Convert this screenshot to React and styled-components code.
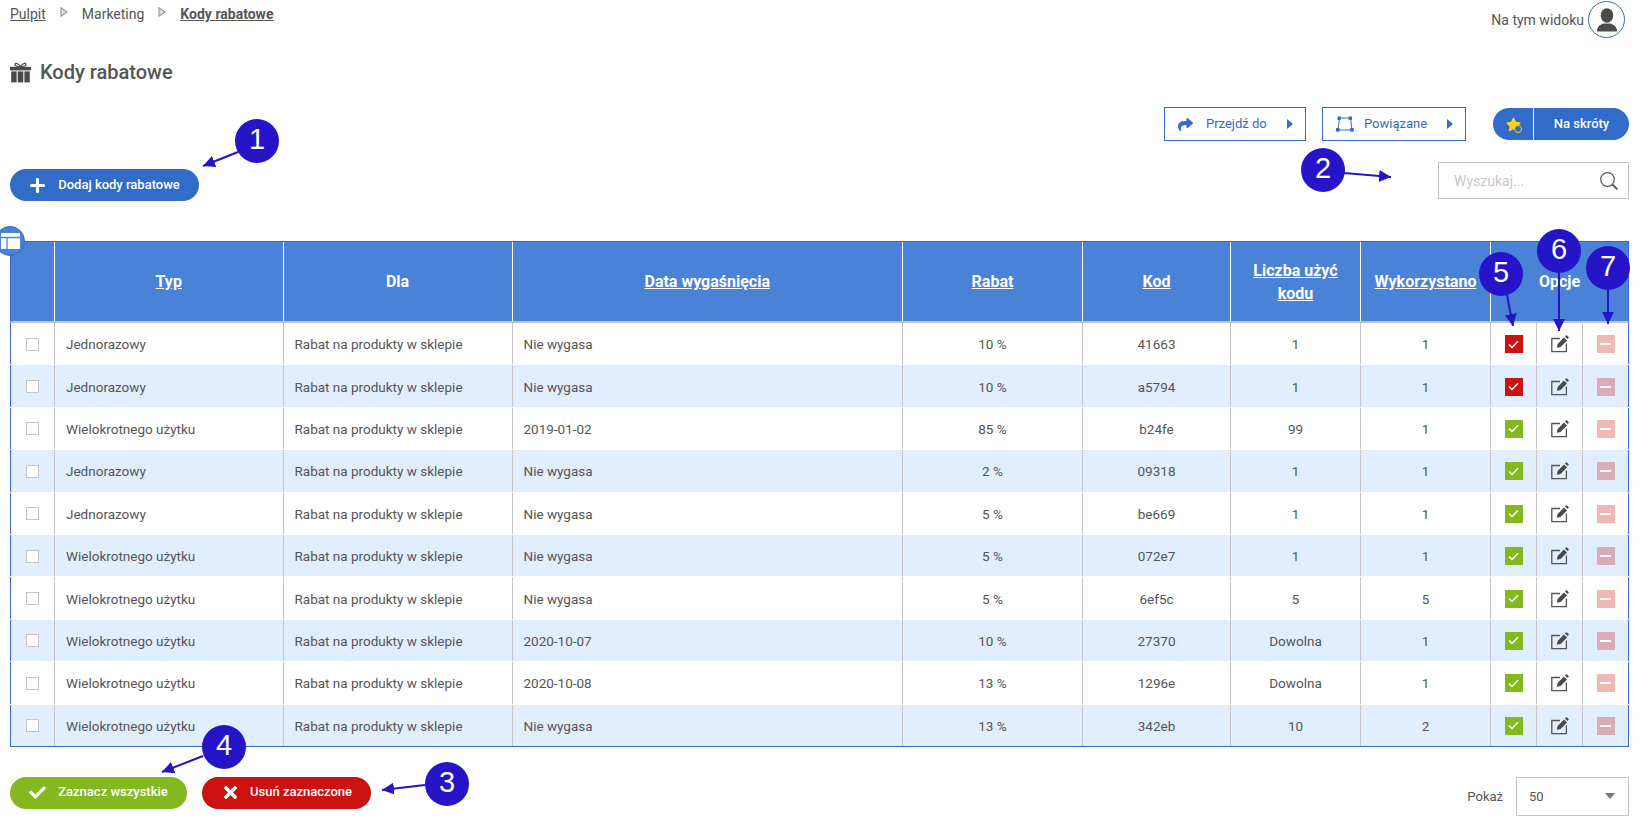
import React from "react";
import styled, { createGlobalStyle, css } from "styled-components";
import { FaPlus, FaCheck, FaTimes, FaShare, FaStar } from "react-icons/fa";

const Global = createGlobalStyle`
  html, body { margin: 0; padding: 0; background: #fff; overflow: hidden; }
  body { font-family: Roboto, "Liberation Sans", sans-serif; color: #555; font-size: 14px; }
  * { box-sizing: border-box; }
`;

const Page = styled.div`
  position: relative;
  width: 1640px;
  height: 830px;
  padding: 0 11px 0 10px;
  overflow: hidden;
`;

const TopBar = styled.div`
  display: flex;
  justify-content: space-between;
  align-items: flex-start;
  height: 62px;
  padding-right: 4px;
`;
const Crumbs = styled.nav`
  display: flex;
  align-items: center;
  height: 28px;
  font-size: 14px;
`;
const Crumb = styled.span`
  color: #555;
  text-decoration: ${(p) => (p.$link ? "underline" : "none")};
  font-weight: ${(p) => (p.$active ? 700 : 400)};
`;
const CrumbSep = styled.svg`
  width: 8px;
  height: 10px;
  margin: -5px 14px 0 14px;
`;
const UserBox = styled.div`
  display: flex;
  align-items: center;
  gap: 4px;
  padding-top: 1px;
  font-size: 14px;
  color: #555;
`;
const Avatar = styled.div`
  width: 37px;
  height: 37px;
  border-radius: 50%;
  border: 1px solid #306cc8;
  display: flex;
  align-items: center;
  justify-content: center;
`;

const Title = styled.h1`
  display: flex;
  align-items: center;
  gap: 9px;
  margin: 0;
  height: 20px;
  font-size: 20px;
  font-weight: 500;
  color: #555;
`;

const Actions = styled.div`
  display: flex;
  justify-content: flex-end;
  align-items: center;
  height: 34px;
  margin-top: 25px;
`;
const OutlineButton = styled.button`
  display: flex;
  align-items: center;
  width: ${(p) => p.$w}px;
  height: 34px;
  margin-right: ${(p) => p.$mr}px;
  padding: 0 12px 0 13px;
  background: #fff;
  border: 1px solid #306cc8;
  color: #306cc8;
  font: 400 13px Roboto, sans-serif;
  svg { flex: none; }
  span { flex: 1; text-align: left; padding-left: ${(p) => p.$tp}px; padding-bottom: 2px; }
`;
const Caret = styled.i`
  width: 0;
  height: 0;
  border-left: 6px solid #306cc8;
  border-top: 5px solid transparent;
  border-bottom: 5px solid transparent;
`;
const Shortcut = styled.button`
  display: flex;
  align-items: center;
  width: 136px;
  height: 32px;
  padding: 0;
  border: 0;
  border-radius: 16px;
  background: #306cc8;
  color: #fff;
  font: 500 13px Roboto, sans-serif;
`;
const ShortcutIcon = styled.span`
  position: relative;
  display: flex;
  justify-content: center;
  align-items: center;
  width: 41px;
  height: 100%;
  border-right: 1px solid #fff;
  color: #f8d21c;
  font-size: 15px;
  &::after {
    content: "";
    position: absolute;
    left: 21px;
    top: 17px;
    width: 6px;
    height: 6px;
    border-radius: 50%;
    background: #306cc8;
    border: 1.5px solid #f8d21c;
  }
`;
const ShortcutLabel = styled.span`
  flex: 1;
  text-align: center;
  padding-bottom: 2px;
`;

const ToolRow = styled.div`
  display: flex;
  justify-content: space-between;
  align-items: flex-end;
  margin-top: 21px;
  height: 39px;
`;
const Pill = styled.button`
  display: flex;
  align-items: center;
  justify-content: center;
  gap: ${(p) => p.$gap || 13}px;
  width: ${(p) => p.$w}px;
  height: 32px;
  padding: 0 0 2px;
  border: 0;
  border-radius: 16px;
  background: ${(p) => p.$bg};
  color: #fff;
  font: 500 13px Roboto, sans-serif;
  svg { font-size: ${(p) => p.$icon || 15}px; margin-top: 2px; }
`;
const Search = styled.div`
  display: flex;
  align-items: center;
  justify-content: space-between;
  align-self: flex-start;
  width: 191px;
  height: 37px;
  padding: 0 9px 0 15px;
  border: 1px solid #c4c4c4;
  color: #c8c8c8;
  font-size: 14px;
`;

const COLS = "44px 228.5px 229px 390.5px 180px 148px 130px 130px 46px 46px 45px";

const rowFrame = css`
  display: grid;
  grid-template-columns: ${COLS};
  border-left: 1px solid #306cc8;
  border-right: 1px solid #306cc8;
`;

const TableWrap = styled.div`
  position: relative;
  margin-top: 40px;
  width: 1619px;
  border-top: 1px solid #306cc8;
  border-bottom: 1px solid #306cc8;
`;
const TableBadge = styled.div`
  position: absolute;
  left: -15px;
  top: -16px;
  width: 30px;
  height: 30px;
  border-radius: 50%;
  background: #4a82d8;
  border: 1px solid #306cc8;
  display: flex;
  align-items: center;
  justify-content: center;
  z-index: 2;
`;
const HeadRow = styled.div`
  ${rowFrame}
  height: 81px;
  background: linear-gradient(#4a82d8, #4a82d8) content-box;
  border-bottom: 2px solid #c4c4c4;
`;
const HeadCell = styled.div`
  grid-column: ${(p) => (p.$span ? `span ${p.$span}` : "auto")};
  display: flex;
  align-items: center;
  justify-content: center;
  text-align: center;
  padding: 0 8px;
  color: #fff;
  font-size: 16px;
  font-weight: 700;
  line-height: 23px;
  text-decoration: ${(p) => (p.$plain ? "none" : "underline")};
  border-right: 1px solid #fff;
  &:last-child { border-right: 0; }
`;
const Row = styled.div`
  ${rowFrame}
  height: 41.4px;
  margin-bottom: 1px;
  background: ${(p) => (p.$alt ? "#e1eeff" : "#fff")};
  &:last-child { margin-bottom: 0; }
`;
const Cell = styled.div`
  display: flex;
  align-items: center;
  justify-content: ${(p) => (p.$left ? "flex-start" : "center")};
  padding: ${(p) => (p.$left ? "1px 0 0 11px" : "1px 0 0")};
  border-right: 1px solid #c4c4c4;
  font-size: 13.5px;
  color: #555;
  &:last-child { border-right: 0; }
`;
const Check = styled.span`
  width: 13px;
  height: 13px;
  background: #fff;
  border: 1px solid #c4c4c4;
`;
const Square = styled.span`
  width: 18px;
  height: 18px;
  display: flex;
  align-items: center;
  justify-content: center;
  background: ${(p) => p.$bg};
`;
const MinusBar = styled.i`
  width: 11px;
  height: 2px;
  background: #fff;
`;

const Footer = styled.div`
  display: flex;
  justify-content: space-between;
  align-items: flex-start;
  margin-top: 30px;
`;
const FooterLeft = styled.div`
  display: flex;
  gap: 15px;
`;
const ShowBox = styled.div`
  display: flex;
  align-items: center;
  gap: 13px;
  font-size: 13px;
`;
const Select = styled.div`
  display: flex;
  align-items: center;
  justify-content: space-between;
  width: 113px;
  height: 39px;
  padding: 0 13px 0 12px;
  border: 1px solid #c4c4c4;
  font-size: 13px;
  color: #555;
`;
const SelectCaret = styled.i`
  width: 0;
  height: 0;
  border-top: 6px solid #777;
  border-left: 5px solid transparent;
  border-right: 5px solid transparent;
`;

const Callouts = styled.svg`
  position: absolute;
  inset: 0;
  width: 1640px;
  height: 830px;
  pointer-events: none;
  z-index: 3;
`;
const Callout = styled.div`
  position: absolute;
  left: ${(p) => p.$x - 22}px;
  top: ${(p) => p.$y - 22}px;
  width: 44px;
  height: 44px;
  border-radius: 50%;
  background: #2514c8;
  color: #fff;
  display: flex;
  align-items: center;
  justify-content: center;
  font: 400 29px "Liberation Sans", Arial, sans-serif;
  padding-bottom: 3px;
  z-index: 4;
`;

const rows = [
  ["Jednorazowy", "Nie wygasa", "10 %", "41663", "1", "1", false],
  ["Jednorazowy", "Nie wygasa", "10 %", "a5794", "1", "1", false],
  ["Wielokrotnego użytku", "2019-01-02", "85 %", "b24fe", "99", "1", true],
  ["Jednorazowy", "Nie wygasa", "2 %", "09318", "1", "1", true],
  ["Jednorazowy", "Nie wygasa", "5 %", "be669", "1", "1", true],
  ["Wielokrotnego użytku", "Nie wygasa", "5 %", "072e7", "1", "1", true],
  ["Wielokrotnego użytku", "Nie wygasa", "5 %", "6ef5c", "5", "5", true],
  ["Wielokrotnego użytku", "2020-10-07", "10 %", "27370", "Dowolna", "1", true],
  ["Wielokrotnego użytku", "2020-10-08", "13 %", "1296e", "Dowolna", "1", true],
  ["Wielokrotnego użytku", "Nie wygasa", "13 %", "342eb", "10", "2", true],
];

const arrows = [
  [238, 152, 203, 166],
  [1344, 173, 1391, 177],
  [425, 785, 382, 790],
  [203, 756, 162, 772],
  [1507, 295, 1513, 326],
  [1559, 273, 1559, 331],
  [1608, 290, 1608, 324],
];
const callouts = [
  [1, 257, 141],
  [2, 1323, 170],
  [3, 447, 784],
  [4, 224, 747],
  [5, 1501, 274],
  [6, 1559, 251],
  [7, 1608, 268],
];

const SepIcon = () => (
  <CrumbSep viewBox="0 0 8 10">
    <path d="M1 .8 7 5 1 9.2Z" fill="#e4e4e4" stroke="#999" strokeWidth="1.2" />
  </CrumbSep>
);

const GiftIcon = () => (
  <svg width="21" height="21" viewBox="0 0 21 21" fill="none">
    <path d="M10.5 4.5C8 1 5.5.8 5 2.3 4.6 3.7 7 4.6 10.5 4.5 14 4.6 16.4 3.7 16 2.3 15.5.8 13 1 10.5 4.5Z" stroke="#4a4a4a" strokeWidth="1.2" />
    <rect x="0" y="4.8" width="21" height="3.6" fill="#4a4a4a" />
    <rect x="1.2" y="9.4" width="5.4" height="11" fill="#4a4a4a" />
    <rect x="7.7" y="9.4" width="5.6" height="11" fill="#4a4a4a" />
    <rect x="14.4" y="9.4" width="5.4" height="11" fill="#4a4a4a" />
  </svg>
);

const PersonIcon = () => (
  <svg width="22" height="24" viewBox="0 0 22 24">
    <ellipse cx="11" cy="7.5" rx="6.2" ry="7.3" fill="#4a4a4a" />
    <path d="M1 23.5C1 19 3 17 8 15.5h6c5 1.5 7 3.5 7 8Z" fill="#4a4a4a" />
  </svg>
);

const SmallCheck = () => (
  <svg width="11" height="9" viewBox="0 0 11 9" fill="none">
    <path d="M1 4.5 4 7.5 10 1.2" stroke="#fff" strokeWidth="1.5" />
  </svg>
);

const EditIcon = () => (
  <svg width="18" height="18" viewBox="0 0 18 18" fill="none">
    <path d="M9 3.5H.8V16.6H15.4V8.5" stroke="#555" strokeWidth="1.3" />
    <path d="M5.8 12.8 6.6 9 13 2.6 16 5.6 9.6 12Z" fill="#4a4a4a" />
    <path d="M14 1.6 15 .6a.8.8 0 0 1 1.1 0l1.4 1.4a.8.8 0 0 1 0 1.1l-1 1Z" fill="#4a4a4a" />
  </svg>
);

const VectorIcon = () => (
  <svg width="18" height="16" viewBox="0 0 18 16" fill="none">
    <path d="M3.5 2H14.5L16 14H2Z" stroke="#306cc8" strokeWidth="1" />
    <rect x="1.5" y=".5" width="3.4" height="3.4" fill="#306cc8" />
    <rect x="12.6" y=".5" width="3.4" height="3.4" fill="#306cc8" />
    <rect x="0" y="12" width="3.6" height="3.6" fill="#306cc8" />
    <rect x="14.2" y="12" width="3.6" height="3.6" fill="#306cc8" />
  </svg>
);

const SearchIcon = () => (
  <svg width="20" height="20" viewBox="0 0 20 20" fill="none">
    <circle cx="8.5" cy="8.5" r="6.8" stroke="#555" strokeWidth="1.2" />
    <path d="M13.6 13.6 18.4 18.4" stroke="#555" strokeWidth="2" />
  </svg>
);

const LayoutIcon = () => (
  <svg width="19" height="16" viewBox="0 0 19 16">
    <rect x="0" y="0" width="19" height="16" fill="#fff" />
    <path d="M0 4.5H19M6 4.5V16" stroke="#4a82d8" strokeWidth="1.3" />
  </svg>
);

export default function App() {
  return (
    <Page>
      <Global />
      <TopBar>
        <Crumbs>
          <Crumb $link>Pulpit</Crumb>
          <SepIcon />
          <Crumb>Marketing</Crumb>
          <SepIcon />
          <Crumb $link $active>Kody rabatowe</Crumb>
        </Crumbs>
        <UserBox>
          Na tym widoku
          <Avatar><PersonIcon /></Avatar>
        </UserBox>
      </TopBar>

      <Title><GiftIcon />Kody rabatowe</Title>

      <Actions>
        <OutlineButton $w={142} $mr={16} $tp={13}>
          <FaShare size={15} />
          <span>Przejdź do</span>
          <Caret />
        </OutlineButton>
        <OutlineButton $w={144} $mr={27} $tp={10}>
          <VectorIcon />
          <span>Powiązane</span>
          <Caret />
        </OutlineButton>
        <Shortcut>
          <ShortcutIcon><FaStar /></ShortcutIcon>
          <ShortcutLabel>Na skróty</ShortcutLabel>
        </Shortcut>
      </Actions>

      <ToolRow>
        <Pill $w={189} $bg="#306cc8" $icon={17} $gap={12}>
          <FaPlus />
          Dodaj kody rabatowe
        </Pill>
        <Search>
          Wyszukaj...
          <SearchIcon />
        </Search>
      </ToolRow>

      <TableWrap>
        <TableBadge><LayoutIcon /></TableBadge>
        <HeadRow>
          <HeadCell />
          <HeadCell>Typ</HeadCell>
          <HeadCell $plain>Dla</HeadCell>
          <HeadCell>Data wygaśnięcia</HeadCell>
          <HeadCell>Rabat</HeadCell>
          <HeadCell>Kod</HeadCell>
          <HeadCell>Liczba użyć kodu</HeadCell>
          <HeadCell>Wykorzystano</HeadCell>
          <HeadCell $plain $span={3}>Opcje</HeadCell>
        </HeadRow>
        {rows.map((r, i) => (
          <Row key={r[3]} $alt={i % 2 === 1}>
            <Cell><Check /></Cell>
            <Cell $left>{r[0]}</Cell>
            <Cell $left>Rabat na produkty w sklepie</Cell>
            <Cell $left>{r[1]}</Cell>
            <Cell>{r[2]}</Cell>
            <Cell>{r[3]}</Cell>
            <Cell>{r[4]}</Cell>
            <Cell>{r[5]}</Cell>
            <Cell><Square $bg={r[6] ? "#84b81f" : "#cc1111"}><SmallCheck /></Square></Cell>
            <Cell><EditIcon /></Cell>
            <Cell><Square $bg="rgba(204,17,17,.3)"><MinusBar /></Square></Cell>
          </Row>
        ))}
      </TableWrap>

      <Footer>
        <FooterLeft>
          <Pill $w={177} $bg="#84b81f" $icon={17} $gap={12}>
            <FaCheck />
            Zaznacz wszystkie
          </Pill>
          <Pill $w={169} $bg="#cc1111" $icon={19} $gap={10}>
            <FaTimes />
            Usuń zaznaczone
          </Pill>
        </FooterLeft>
        <ShowBox>
          Pokaż
          <Select>50<SelectCaret /></Select>
        </ShowBox>
      </Footer>

      <Callouts viewBox="0 0 1640 830">
        <defs>
          <marker id="head" markerUnits="userSpaceOnUse" markerWidth="14" markerHeight="12" refX="12" refY="6" orient="auto">
            <path d="M0 0 12 6 0 12Z" fill="#2514c8" />
          </marker>
        </defs>
        {arrows.map(([a, b, c, d]) => (
          <line key={`${a}-${b}`} x1={a} y1={b} x2={c} y2={d} stroke="#2514c8" strokeWidth="2" markerEnd="url(#head)" />
        ))}
      </Callouts>
      {callouts.map(([n, x, y]) => (
        <Callout key={n} $x={x} $y={y}>{n}</Callout>
      ))}
    </Page>
  );
}
